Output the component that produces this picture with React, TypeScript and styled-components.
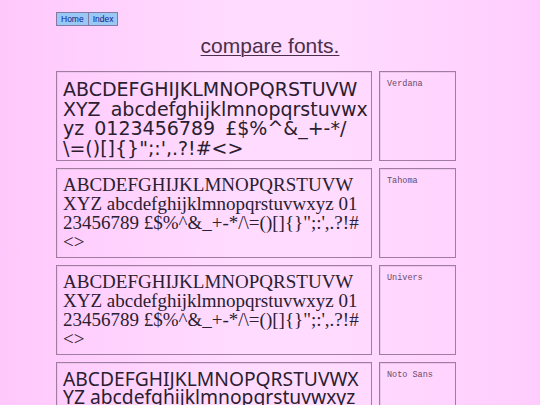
import React from 'react'
import styled, { createGlobalStyle } from 'styled-components'

const GlobalStyle = createGlobalStyle`
  html, body {
    margin: 0;
    padding: 0;
  }
  body {
    min-height: 405px;
    background: linear-gradient(to right, #ffc8fc 0%, #ffdcff 45%, #ffdcff 60%, #ffcdfd 100%);
    font-family: "Liberation Sans", Arial, sans-serif;
  }
`

const Page = styled.div`
  padding: 12px 0 0 56px;
  width: 400px;
`

const Nav = styled.nav`
  display: flex;
`

const NavButton = styled.a`
  display: block;
  height: 12px;
  padding: 0 4px;
  background: #99c8f4;
  border: 1px solid #8478a4;
  margin-left: -1px;
  font-size: 8.5px;
  line-height: 12px;
  color: #10208c;
  text-decoration: none;
  &:first-child {
    margin-left: 0;
  }
`

const Title = styled.h1`
  margin: 7px 0 0 0;
  width: 428px;
  text-align: center;
  font-family: "Liberation Sans", Arial, sans-serif;
  font-weight: normal;
  font-size: 21px;
  line-height: 26px;
  color: #4a2f4a;
  text-decoration: underline;
  text-underline-offset: 2px;
  text-decoration-thickness: 1px;
`

const List = styled.div`
  margin-top: 12px;
  display: flex;
  flex-direction: column;
  gap: 7px;
`

const Row = styled.div`
  display: grid;
  grid-template-columns: 316px 77px;
  gap: 7px;
  height: 90px;
`

const Box = styled.div`
  box-sizing: border-box;
  border: 1px solid #a07ca0;
  box-shadow: inset 1px 1px 0 #ecc4ec;
  overflow: hidden;
`

type SampleProps = { $family: string; $size: number; $lh: number; $top: number; $right: number; $ws: number }

const Sample = styled(Box)<SampleProps>`
  padding: ${p => p.$top}px ${p => p.$right}px 0 6px;
  font-family: ${p => p.$family};
  font-size: ${p => p.$size}px;
  line-height: ${p => p.$lh}px;
  word-spacing: ${p => p.$ws}px;
  color: #2a2030;
  word-break: break-all;
`

const Label = styled(Box)`
  padding: 7px 7px;
  font-family: "Liberation Mono", "DejaVu Sans Mono", monospace;
  font-size: 8.5px;
  color: #6a4a6a;
`

const text = 'ABCDEFGHIJKLMNOPQRSTUVWXYZ abcdefghijklmnopqrstuvwxyz 0123456789 £$%^&_+-*/\\=()[]{}";:\',.?!#<>'

const fonts = [
  { name: 'Verdana', family: '"DejaVu Sans", sans-serif', size: 19, lh: 19.5, top: 8, right: 3, ws: 4 },
  { name: 'Tahoma', family: '"Liberation Serif", serif', size: 19, lh: 19, top: 6, right: 6, ws: 0 },
  { name: 'Univers', family: '"Liberation Serif", serif', size: 19, lh: 19, top: 6, right: 6, ws: 0 },
  { name: 'Noto Sans', family: '"Noto Sans", sans-serif', size: 19.25, lh: 18, top: 7, right: 6, ws: 0 },
]

export default function App() {
  return (
    <>
      <GlobalStyle />
      <Page>
        <Nav>
          <NavButton href="#">Home</NavButton>
          <NavButton href="#">Index</NavButton>
        </Nav>
        <Title>compare fonts.</Title>
        <List>
          {fonts.map(f => (
            <Row key={f.name}>
              <Sample $family={f.family} $size={f.size} $lh={f.lh} $top={f.top} $right={f.right} $ws={f.ws}>
                {text}
              </Sample>
              <Label>{f.name}</Label>
            </Row>
          ))}
        </List>
      </Page>
    </>
  )
}
